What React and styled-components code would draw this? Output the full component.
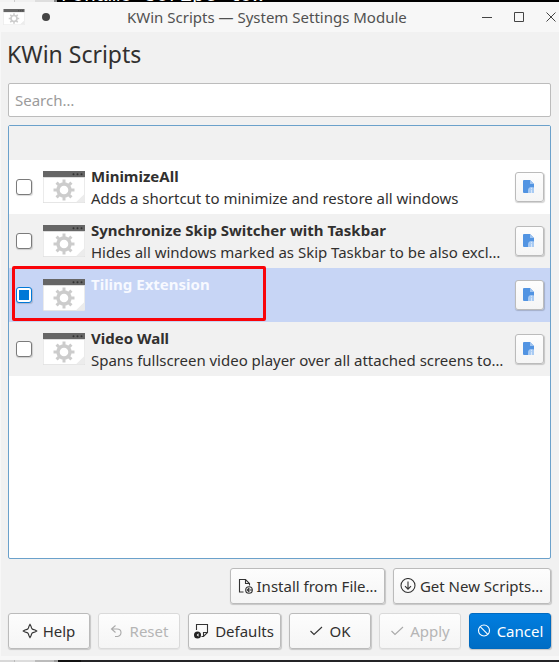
import React from "react";
import styled, { createGlobalStyle, css } from "styled-components";

const Global = createGlobalStyle`
  * { box-sizing: border-box; }
  body { margin: 0; background: #f1f1f1; font-family: "Noto Sans", sans-serif; font-size: 15px; color: #31302f; overflow: hidden; }
  svg { display: block; flex: none; }
`;
const Screen = styled.div`
  width: 559px; height: 662px; display: flex; flex-direction: column; overflow: hidden;
`;
const Backdrop = styled.div`
  height: 2px; flex: none; overflow: hidden; display: flex;
  background: linear-gradient(90deg, #f3f3f3 0 14px, #ccc 14px 15px, #f0f0f0 15px 35px, #dedede 35px 54px, #888 54px 57px, #000 57px);
`;
const Peek = styled.span`
  margin: -12px 0 0 60px; color: #fff; font: 20px/16px "Liberation Mono", monospace; white-space: pre;
`;
const Window = styled.div`
  height: 658px; flex: none; display: flex; flex-direction: column;
  background: #f1f1f1; border-left: 1px solid #f7f7f7; border-bottom: 4px solid #f7f7f7;
`;
const TitleBar = styled.header`
  height: 30px; flex: none; display: flex; align-items: center; background: #f7f7f7;
  padding-left: 2px; color: #515151;
`;
const Dot = styled.i`
  width: 8px; height: 8px; border-radius: 50%; background: #444; margin-left: 17px;
`;
const WindowTitle = styled.div`
  margin-left: 77px; flex: 1; white-space: nowrap; line-height: 20px;
`;
const Body = styled.main`
  padding: 8px 8px 0 7px; display: flex; flex-direction: column;
`;
const Heading = styled.h1`
  margin: 0 0 10px -1px; height: 33px; font-size: 23px; line-height: 29px; font-weight: 400;
`;
const Search = styled.div`
  height: 34px; border: 1px solid #bcbcbc; border-radius: 2px; background: #fff; color: #9b9b9b;
  padding: 0 6px; line-height: 33px;
`;
const List = styled.div`
  position: relative; height: 434px; margin-top: 8px; background: #fff; border: 1px solid #6ba1cb; border-radius: 2px;
`;
const ListHeader = styled.div`height: 34px; background: #f1f1f1;`;
const Row = styled.div`
  height: 54px; display: flex; align-items: center; padding: 0 6px 0 7px;
  background: ${(p) => (p.$selected ? "#c7d5f5" : p.$alt ? "#f1f1f1" : "#fff")};
`;
const Check = styled.span`
  width: 16px; height: 16px; flex: none; border-radius: 3px; background: #fff;
  border: 1px solid ${(p) => (p.$on ? "#0078d7" : "#7b7b7b")};
  box-shadow: 0.5px 1px 1px rgba(0, 0, 0, 0.15);
  display: flex; align-items: center; justify-content: center;
  &::after { content: ""; width: 10px; height: 10px; background: ${(p) => (p.$on ? "#0078d7" : "transparent")}; }
`;
const IconSlot = styled.span`margin: 0 6px 0 11px;`;
const Copy = styled.div`
  flex: 1; min-width: 0; height: 44px; line-height: 22px; white-space: nowrap;
`;
const Name = styled.div`font-weight: 700; color: ${(p) => (p.$selected ? "#f7f9ff" : "#31302f")};`;
const Info = styled.div`height: 22px; letter-spacing: -0.015px;`;
const raised = css`
  border: 1px solid #bbb; border-radius: 3px; background: linear-gradient(#fdfdfd, #f5f5f5);
  box-shadow: 0.5px 1px 1px rgba(0, 0, 0, 0.18);
`;
const AboutButton = styled.button`
  ${raised}
  width: 29px; height: 30px; padding: 0 1px 1px 0; display: flex; align-items: center; justify-content: center;
`;
const Highlight = styled.div`
  position: absolute; left: 3px; top: 140px; width: 254px; height: 55px; border: 3px solid #f90409; border-radius: 2px;
`;
const Actions = styled.div`
  display: flex; justify-content: ${(p) => (p.$end ? "flex-end" : "flex-start")}; gap: 8px; margin-top: 9px;
`;
const Button = styled.button`
  ${raised}
  width: ${(p) => p.$w}px; height: 36px; padding: 0 1px 0 0; flex: none; display: flex; align-items: center; justify-content: center;
  gap: ${(p) => p.$gap ?? 5}px; font: 15px/20px "Noto Sans", sans-serif; color: #31302f; white-space: nowrap;
  ${(p) => p.$muted && css`color: #b5b5b5; border-color: #dadada; box-shadow: 0 1px 1px rgba(0,0,0,.06);`}
  ${(p) => p.$primary && css`color: #fff; border-color: #006ac0; background: linear-gradient(#007ee0, #006dc4);`}
`;
const Footer = styled.div`
  height: 2px; flex: none;
  background: linear-gradient(90deg, #d8d8d8 0 14px, #bbb 14px 15px, #dcdcdc 15px 35px, #bbb 35px 54px, #999 54px 58px, #111 58px 81px, #242426 81px);
`;

const TEETH = [0, 45, 90, 135, 180, 225, 270, 315];
function ScriptIcon({ w = 42, h = 32 }) {
  return (
    <svg width={w} height={h} viewBox="0 0 42 32">
      <path d="M0 0H42V32H0z" fill="#dedede" />
      <path d="M.6 5H41.4V31.2H.6z" fill="#fff" />
      <path d="M41.4 23V31.2H33z" fill="#ececec" />
      <path d="M0 0H42V6H0z" fill="#666" />
      <path d="M0 6H42V7H0z" fill="#ddd" />
      <g fill="#333"><circle cx="30.5" cy="3.3" r="1" /><circle cx="34.5" cy="3.3" r="1" /><circle cx="38.5" cy="3.3" r="1" /></g>
      <g transform="translate(21 19)" fill="#ccc">
        {TEETH.map((a) => <path key={a} d="M-1.5-10.5h3V-6h-3z" transform={`rotate(${a})`} />)}
        <circle r="6" fill="none" stroke="#ccc" strokeWidth="3.4" />
      </g>
    </svg>
  );
}
const AboutIcon = () => (
  <svg width="14" height="14" viewBox="0 0 14 14">
    <path d="M2 0h6l4 4v9H2Q1 13 1 12V1Q1 0 2 0z" fill="#5294e2" />
    <path d="M8 0l4 4H8z" fill="#9fc4f0" />
    <path d="M6 13V10.500Q6 7 9.500 7q1.500 0 2.500.6V13z" fill="#a9cbf3" />
    <path d="M9 8h1v1H9zM9 9.800h1V13H9z" fill="#d6e6fa" />
  </svg>
);
const Line = ({ color = "#333", children }) => (
  <svg width="16" height="16" viewBox="0 0 16 16" fill="none" stroke={color} strokeWidth="1.1">{children}</svg>
);
const HelpIcon = () => <Line><path d="M8 1.300Q9 2.600 9.600 5q.5 1.200 1.400 1.400 2.200.5 3.700 1.600Q13.200 9.100 11 9.600q-.9.200-1.400 1.400-.6 2.400-1.600 3.700Q7 13.400 6.400 11q-.5-1.200-1.400-1.400Q2.800 9.100 1.300 8 2.800 6.900 5 6.400 5.900 6.200 6.400 5 7 2.600 8 1.300z" /></Line>;
const ResetIcon = () => <Line color="#aaa"><path d="M6.500 2.500L2.500 6l4 3.500M2.500 6H8q4 0 4 3.500T8.500 13.500H6" /></Line>;
const DefaultsIcon = () => (
  <Line>
    <path d="M2.500 7V1.500h11v8l-4 4H7.500M9.500 13.500v-4h4" />
    <circle cx="3.500" cy="12" r="3.500" fill="#222" stroke="none" /><path d="M4.500 10.300L2.700 12l1.800 1.700z" fill="#fff" stroke="none" />
  </Line>
);
const CheckIcon = ({ color }) => <Line color={color}><path d="M2.500 8l3.500 3.500L14 4" /></Line>;
const CancelIcon = () => <Line color="#fff"><circle cx="8" cy="7.500" r="5.500" /><path d="M4.200 3.600l7.600 7.800" /></Line>;
const InstallIcon = () => (
  <Line>
    <path d="M6.500 14H2.500V1.500h6l4 4v2M8.500 1.500v4h4" />
    <circle cx="12" cy="12" r="3.300" /><path d="M15.300 12h-5M12.300 10l-2 2 2 2" />
  </Line>
);
const DownloadIcon = () => <Line><circle cx="8" cy="7.500" r="7" /><path d="M8 3.500v7.500M5 8.200l3 3 3-3" /></Line>;
const Controls = () => (
  <svg width="79" height="14" viewBox="0 0 79 14" fill="none" stroke="#444" strokeWidth="1">
    <path d="M2 7.500h10M34.500 2.500h9v9h-9zM66.500 2.500l9 9M75.500 2.500l-9 9" />
  </svg>
);

const SCRIPTS = [
  { name: "MinimizeAll", info: "Adds a shortcut to minimize and restore all windows" },
  { name: "Synchronize Skip Switcher with Taskbar", info: "Hides all windows marked as Skip Taskbar to be also excl…", alt: true },
  { name: "Tiling Extension", info: "", selected: true },
  { name: "Video Wall", info: "Spans fullscreen video player over all attached screens to…", alt: true },
];

export default function App() {
  return (
    <Screen>
      <Global />
      <Backdrop><Peek>rename script low</Peek></Backdrop>
      <Window>
        <TitleBar>
          <ScriptIcon w={22} h={16} />
          <Dot />
          <WindowTitle>KWin Scripts — System Settings Module</WindowTitle>
          <Controls />
        </TitleBar>
        <Body>
          <Heading>KWin Scripts</Heading>
          <Search>Search…</Search>
          <List>
            <ListHeader />
            {SCRIPTS.map((s) => (
              <Row key={s.name} $alt={s.alt} $selected={s.selected}>
                <Check $on={s.selected} />
                <IconSlot><ScriptIcon /></IconSlot>
                <Copy><Name $selected={s.selected}>{s.name}</Name><Info>{s.info}</Info></Copy>
                <AboutButton><AboutIcon /></AboutButton>
              </Row>
            ))}
            <Highlight />
          </List>
          <Actions $end>
            <Button $w={155} $gap={4}><InstallIcon />Install from File…</Button>
            <Button $w={158} $gap={4}><DownloadIcon />Get New Scripts…</Button>
          </Actions>
          <Actions>
            <Button $w={82}><HelpIcon />Help</Button>
            <Button $w={82} $muted><ResetIcon />Reset</Button>
            <Button $w={93}><DefaultsIcon />Defaults</Button>
            <Button $w={82}><CheckIcon />OK</Button>
            <Button $w={82} $muted><CheckIcon color="#aaa" />Apply</Button>
            <Button $w={82} $primary><CancelIcon />Cancel</Button>
          </Actions>
        </Body>
      </Window>
      <Footer />
    </Screen>
  );
}
